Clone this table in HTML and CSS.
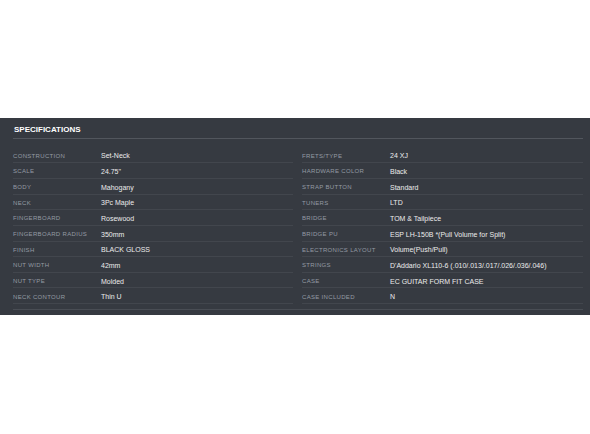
FILE: index.html
```html
<!DOCTYPE html>
<html>
<head>
<meta charset="utf-8">
<link rel="stylesheet" href="styles.css">
</head>
<body>
<section class="specs">
  <h2 class="specs-title">SPECIFICATIONS</h2>
  <div class="specs-grid">
    <div class="specs-col">
      <div class="row"><span class="label">CONSTRUCTION</span><span class="value">Set-Neck</span></div>
      <div class="row"><span class="label">SCALE</span><span class="value">24.75"</span></div>
      <div class="row"><span class="label">BODY</span><span class="value">Mahogany</span></div>
      <div class="row"><span class="label">NECK</span><span class="value">3Pc Maple</span></div>
      <div class="row"><span class="label">FINGERBOARD</span><span class="value">Rosewood</span></div>
      <div class="row"><span class="label">FINGERBOARD RADIUS</span><span class="value">350mm</span></div>
      <div class="row"><span class="label">FINISH</span><span class="value">BLACK GLOSS</span></div>
      <div class="row"><span class="label">NUT WIDTH</span><span class="value">42mm</span></div>
      <div class="row"><span class="label">NUT TYPE</span><span class="value">Molded</span></div>
      <div class="row"><span class="label">NECK CONTOUR</span><span class="value">Thin U</span></div>
    </div>
    <div class="specs-col">
      <div class="row"><span class="label">FRETS/TYPE</span><span class="value">24 XJ</span></div>
      <div class="row"><span class="label">HARDWARE COLOR</span><span class="value">Black</span></div>
      <div class="row"><span class="label">STRAP BUTTON</span><span class="value">Standard</span></div>
      <div class="row"><span class="label">TUNERS</span><span class="value">LTD</span></div>
      <div class="row"><span class="label">BRIDGE</span><span class="value">TOM &amp; Tailpiece</span></div>
      <div class="row"><span class="label">BRIDGE PU</span><span class="value">ESP LH-150B *(Pull Volume for Split)</span></div>
      <div class="row"><span class="label">ELECTRONICS LAYOUT</span><span class="value">Volume(Push/Pull)</span></div>
      <div class="row"><span class="label">STRINGS</span><span class="value">D'Addario XL110-6 (.010/.013/.017/.026/.036/.046)</span></div>
      <div class="row"><span class="label">CASE</span><span class="value">EC GUITAR FORM FIT CASE</span></div>
      <div class="row"><span class="label">CASE INCLUDED</span><span class="value">N</span></div>
    </div>
  </div>
</section>
</body>
</html>
```
FILE: styles.css
```css
html, body {
  margin: 0;
  padding: 0;
  background: #ffffff;
}
body {
  font-family: "Liberation Sans", Arial, sans-serif;
}
.specs {
  margin-top: 118px;
  background: #363a41;
  padding: 6.6px 7px 4px 13px;
  box-sizing: border-box;
  height: 196.7px;
}
.specs-title {
  margin: 0;
  font-size: 8px;
  line-height: 10px;
  font-weight: bold;
  color: #ffffff;
  padding: 0 0 3.4px 1px;
  border-bottom: 1px solid #52565d;
}
.specs-grid {
  margin-top: 8.6px;
  display: grid;
  grid-template-columns: 280px 281px;
  column-gap: 9px;
  padding-bottom: 4.4px;
  border-bottom: 1px solid #494d54;
}
.specs-col {
  display: flex;
  flex-direction: column;
}
.row {
  display: flex;
  align-items: center;
  padding-top: 1.8px;
  height: 12.87px;
  border-bottom: 1px solid #42464d;
}
.label {
  width: 88px;
  flex: none;
  font-size: 6px;
  letter-spacing: 0.32px;
  color: #959ba4;
  white-space: nowrap;
}
.value {
  font-size: 7px;
  color: #ececec;
  white-space: nowrap;
}
```
